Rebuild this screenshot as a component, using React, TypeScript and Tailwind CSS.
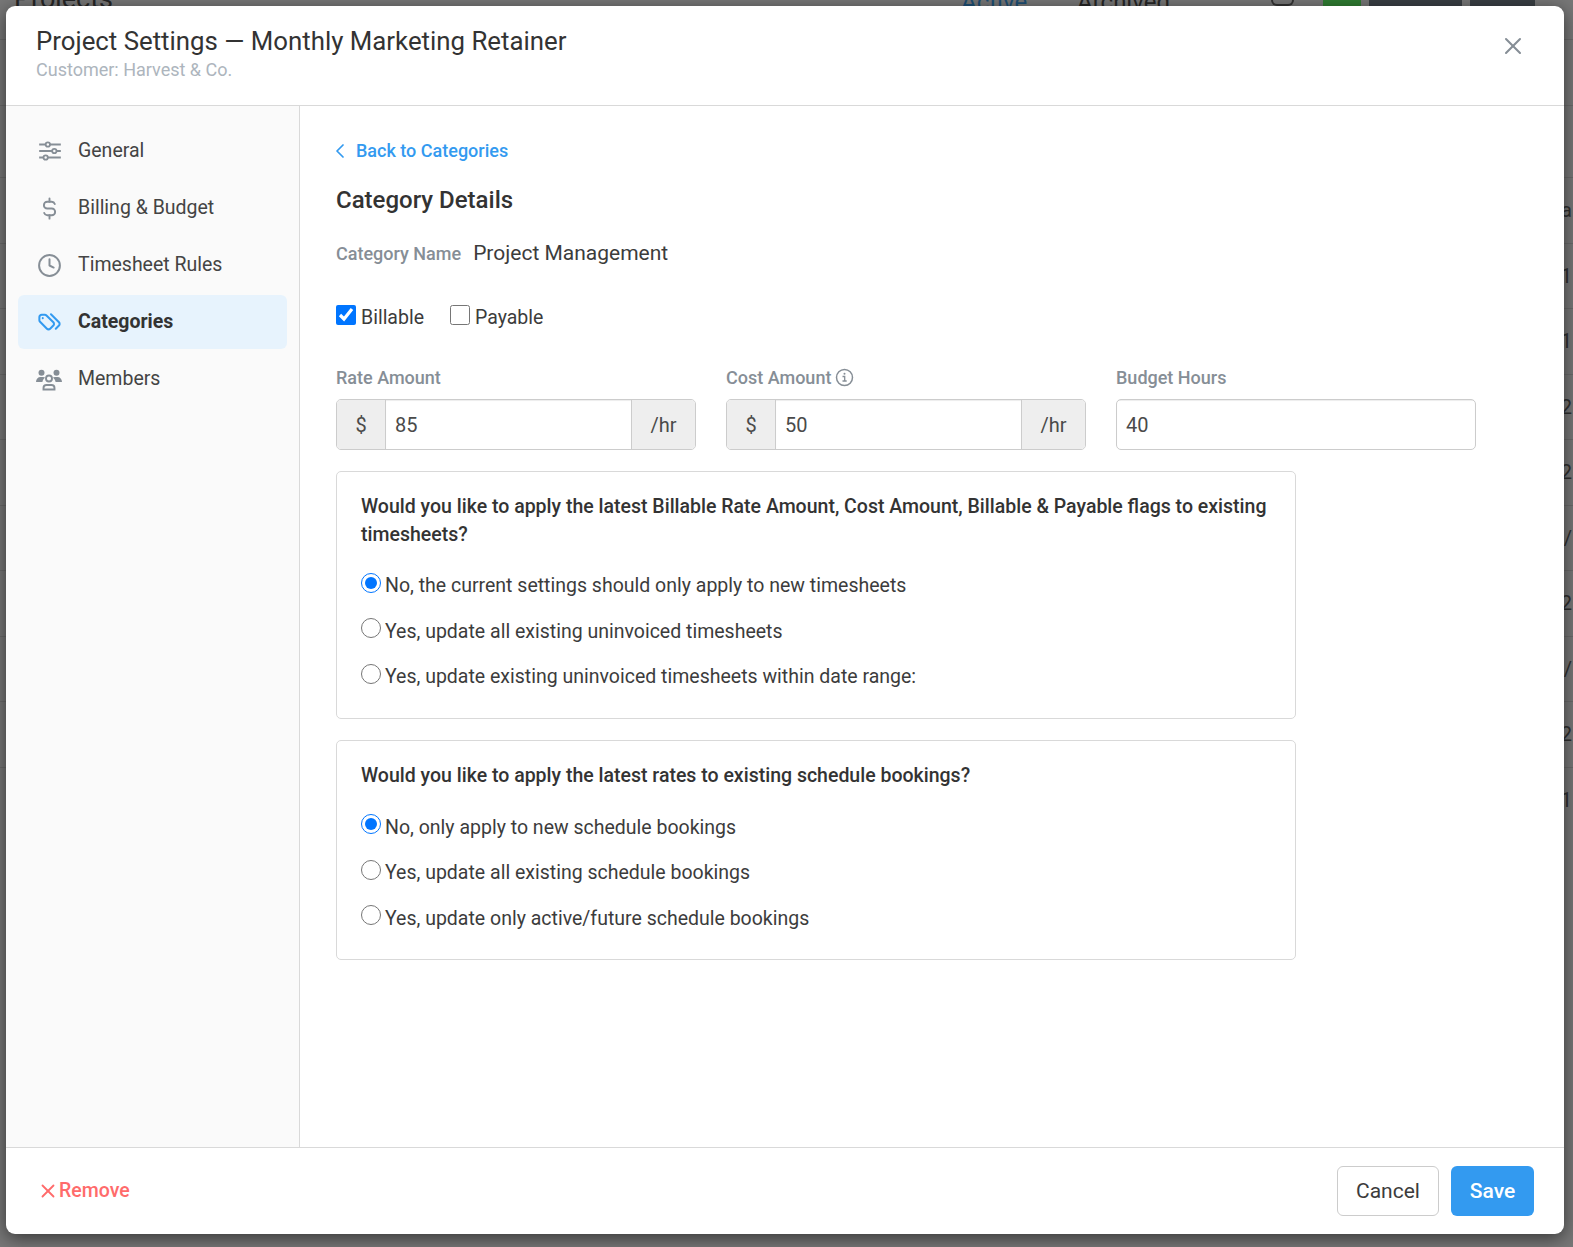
import React from "react";
import { ChevronLeft, Clock, X } from "lucide-react";

function SlidersIcon() {
  return (
    <svg width="26" height="26" viewBox="0 0 24 24" fill="none" stroke="currentColor" strokeWidth="1.7" className="shrink-0">
      <path d="M2 6h6M12 6h10M2 12h12M18 12h4M2 18h4M10 18h12" />
      <circle cx="10" cy="6" r="2" />
      <circle cx="16" cy="12" r="2" />
      <circle cx="8" cy="18" r="2" />
    </svg>
  );
}

function DollarIcon() {
  return (
    <svg width="27" height="27" viewBox="0 0 24 24" fill="none" stroke="currentColor" strokeWidth="1.7" strokeLinecap="round" className="shrink-0">
      <path d="M16.7 8a3 3 0 0 0-2.7-2h-4a3 3 0 0 0 0 6h4a3 3 0 0 1 0 6h-4a3 3 0 0 1-2.7-2" />
      <path d="M12 3v3m0 12v3" />
    </svg>
  );
}

function TagsIcon() {
  return (
    <svg width="27" height="27" viewBox="0 0 24 24" fill="none" stroke="currentColor" strokeWidth="1.8" strokeLinecap="round" strokeLinejoin="round" className="-mt-[2px] shrink-0">
      <path d="M7.859 6h-2.834a2.025 2.025 0 0 0-2.025 2.025v2.834c0 .537.213 1.052.593 1.432l6.116 6.116a2.025 2.025 0 0 0 2.864 0l2.834-2.834a2.025 2.025 0 0 0 0-2.864l-6.117-6.116a2.025 2.025 0 0 0-1.431-.593z" />
      <path d="M17.573 18.407l2.834-2.834a2.025 2.025 0 0 0 0-2.864l-7.117-7.116" />
      <path d="M6 9h-.01" />
    </svg>
  );
}

function MembersIcon() {
  return (
    <svg width="26" height="23" viewBox="0 0 26 23" className="-ml-[2px] shrink-0">
      <g fill="currentColor">
        <circle cx="5.500" cy="4.800" r="3" />
        <circle cx="20.500" cy="4.800" r="3" />
        <path d="M0 14c0-3 2-5 4.500-5h2.500c1 0 1.600.3 2.100.8-1.400 1-2.400 2.400-2.700 4.200H0z" />
        <path d="M26 14c0-3-2-5-4.500-5H19c-1 0-1.600.3-2.100.8 1.400 1 2.400 2.400 2.700 4.200H26z" />
      </g>
      <g fill="none" stroke="currentColor" strokeWidth="1.900">
        <circle cx="13" cy="10.500" r="3" />
        <path d="M7.500 21.500v-1.500c0-2 1.500-3 3-3h5c1.500 0 3 1 3 3v1.500z" />
      </g>
    </svg>
  );
}

function InfoIcon() {
  return (
    <svg width="19" height="19" viewBox="0 0 19 19" fill="none" stroke="currentColor">
      <circle cx="9.500" cy="9.500" r="8" strokeWidth="1.500" />
      <path d="M7.500 8.500h2.200v4.500M7.500 13h4.200" strokeWidth="1.300" />
      <circle cx="9.500" cy="5.800" r="1" fill="currentColor" stroke="none" />
    </svg>
  );
}

const navItems = [
  { label: "General", icon: <SlidersIcon /> },
  { label: "Billing & Budget", icon: <DollarIcon /> },
  { label: "Timesheet Rules", icon: <Clock size={25} strokeWidth={1.9} className="shrink-0" /> },
  { label: "Categories", icon: <TagsIcon />, active: true },
  { label: "Members", icon: <MembersIcon /> },
];

// rows of the table behind the overlay, only their right edge shows
const backRows = ["a", "1", "1", "2", "2", "/", "2", "/", "2", "1"];

function Radio({ checked, label }: { checked?: boolean; label: string }) {
  return (
    <label className="flex h-[45.5px] items-center text-[19.5px] text-[#3c3c3c]">
      <input
        type="radio"
        defaultChecked={checked}
        className="mr-[4px] mt-[-6px] h-[20px] w-[20px] accent-[#0075ff]"
      />
      {label}
    </label>
  );
}

function Affix({ value, prefix, suffix }: { value: string; prefix?: string; suffix?: string }) {
  return (
    <div className="flex h-[51px] overflow-hidden rounded-[5px] border border-[#cccccc] text-[20px] text-[#4a4a4a]">
      {prefix && (
        <span className="flex w-[49px] items-center justify-center border-r border-[#cccccc] bg-[#eeeeee]">
          {prefix}
        </span>
      )}
      <span className="flex min-w-0 flex-1 items-center px-[9px] shadow-[inset_0_1px_1px_rgba(0,0,0,0.075)]">{value}</span>
      {suffix && (
        <span className="flex w-[64px] items-center justify-center border-l border-[#cccccc] bg-[#eeeeee]">
          {suffix}
        </span>
      )}
    </div>
  );
}

export default function App() {
  return (
    <div className="relative h-[1247px] w-[1573px] overflow-hidden bg-[#777777] font-['Roboto',sans-serif]">
      {/* page behind the overlay */}
      <div className="absolute inset-0">
        <div className="flex h-[6px] items-end overflow-hidden pl-[14px] text-[#262626]">
          <span className="w-[947px] shrink-0 text-[27px] leading-[14px]">Projects</span>
          <span className="w-[116px] shrink-0 text-[24px] leading-[8px] text-[#1d4f75]">Active</span>
          <span className="w-[194px] shrink-0 text-[24px] leading-[8px]">Archived</span>
          <span className="mr-[29px] h-[6px] w-[23px] shrink-0 rounded-b-full border-x-2 border-b-2 border-[#333333]" />
          <span className="mr-[8px] h-[6px] w-[38px] shrink-0 bg-[#2f7d32]" />
          <span className="mr-[8px] h-[6px] w-[93px] shrink-0 bg-[#3a3f44]" />
          <span className="h-[6px] w-[65px] shrink-0 bg-[#3a3f44]" />
        </div>
        <div className="mt-[33px] flex h-[66px] border-t border-[#6a6a6a]" />
        <div className="flex h-[72px] border-t border-[#6a6a6a]" />
        {backRows.map((digit, i) => (
          <div
            key={i}
            className="flex h-[65.500px] items-center justify-end border-t border-[#6a6a6a] pr-[1px] text-[20px] text-[#303030]"
          >
            {digit}
          </div>
        ))}
      </div>

      <div className="relative ml-[6px] mt-[6px] flex h-[1228px] w-[1558px] flex-col overflow-hidden rounded-[9px] bg-white shadow-[0_4px_18px_rgba(0,0,0,0.55)]">
        <header className="flex h-[100px] shrink-0 items-start justify-between border-b border-[#d9d9d9] pl-[30px] pr-[37px]">
          <div className="pt-[19px]">
            <h1 className="text-[25.800px] leading-[32px] text-[#333333]">
              Project Settings — Monthly Marketing Retainer
            </h1>
            <p className="mt-[1px] text-[18px] leading-[24px] text-[#adb5bd]">Customer: Harvest &amp; Co.</p>
          </div>
          <X size={28} strokeWidth={1.75} className="mt-[26px] text-[#868e96]" />
        </header>

        <div className="flex min-h-0 flex-1">
          <aside className="flex w-[294px] shrink-0 flex-col gap-[3px] border-r border-[#d9d9d9] bg-[#fafafa] px-[12px] pt-[18px]">
            {navItems.map((item) => (
              <div
                key={item.label}
                className={`flex h-[54px] items-center gap-[17px] rounded-[6px] pl-[20px] text-[19.500px] ${
                  item.active ? "bg-[#e7f3fd] font-bold text-[#333333]" : "text-[#444444]"
                }`}
              >
                <span className={`flex w-[23px] justify-center ${item.active ? "text-[#339af0]" : "text-[#868e96]"}`}>
                  {item.icon}
                </span>
                {item.label}
              </div>
            ))}
          </aside>

          <main className="min-w-0 flex-1 pl-[36px] pt-[32px]">
            <a className="flex h-[24px] items-center text-[18px] font-medium text-[#339af0]">
              <ChevronLeft size={24} strokeWidth={1.75} className="-ml-[8px] mr-[4px] mt-[2px]" />
              Back to Categories
            </a>
            <h2 className="mt-[22px] text-[24px] font-medium leading-[32px] text-[#333333]">Category Details</h2>
            <div className="mt-[21px] flex h-[32px] items-center gap-[12px]">
              <span className="text-[18px] font-medium text-[#868e96]">Category Name</span>
              <span className="pt-[2px] text-[21px] text-[#3c3c3c]">Project Management</span>
            </div>
            <div className="mt-[33px] flex h-[32px] items-center text-[19.500px] text-[#3c3c3c]">
              <label className="flex items-center">
                <input
                  type="checkbox"
                  defaultChecked
                  className="mr-[5px] mt-[-7px] h-[20px] w-[20px] accent-[#0075ff]"
                />
                Billable
              </label>
              <label className="ml-[26px] flex items-center">
                <input type="checkbox" className="mr-[5px] mt-[-7px] h-[20px] w-[20px]" />
                Payable
              </label>
            </div>

            <div className="mt-[30px] grid w-[1140px] grid-cols-3 gap-[30px]">
              <div>
                <div className="mb-[9px] flex h-[26px] items-center text-[18px] font-medium text-[#868e96]">Rate Amount</div>
                <Affix value="85" prefix="$" suffix="/hr" />
              </div>
              <div>
                <div className="mb-[9px] flex h-[26px] items-center gap-[4px] text-[18px] font-medium text-[#868e96]">
                  Cost Amount
                  <span className="text-[#868e96]">
                    <InfoIcon />
                  </span>
                </div>
                <Affix value="50" prefix="$" suffix="/hr" />
              </div>
              <div>
                <div className="mb-[9px] flex h-[26px] items-center text-[18px] font-medium text-[#868e96]">Budget Hours</div>
                <Affix value="40" />
              </div>
            </div>

            <section className="mt-[21px] w-[960px] rounded-[5px] border border-[#d9d9d9] px-[24px] pb-[18px] pt-[21px]">
              <p className="mb-[14px] text-[19.500px] font-medium leading-[28px] text-[#333333]">
                Would you like to apply the latest Billable Rate Amount, Cost Amount, Billable &amp; Payable flags to existing timesheets?
              </p>
              <Radio checked label="No, the current settings should only apply to new timesheets" />
              <Radio label="Yes, update all existing uninvoiced timesheets" />
              <Radio label="Yes, update existing uninvoiced timesheets within date range:" />
            </section>

            <section className="mt-[21px] w-[960px] rounded-[5px] border border-[#d9d9d9] px-[24px] pb-[18px] pt-[21px]">
              <p className="mb-[15px] text-[19.500px] font-medium leading-[28px] text-[#333333]">
                Would you like to apply the latest rates to existing schedule bookings?
              </p>
              <Radio checked label="No, only apply to new schedule bookings" />
              <Radio label="Yes, update all existing schedule bookings" />
              <Radio label="Yes, update only active/future schedule bookings" />
            </section>
          </main>
        </div>

        <footer className="flex h-[87px] shrink-0 items-center justify-between border-t border-[#d9d9d9] pl-[31px] pr-[30px]">
          <button className="flex items-center gap-0 text-[19.500px] font-medium text-[#ff6b6b]">
            <X size={22} strokeWidth={2} />
            Remove
          </button>
          <div className="flex gap-[12px]">
            <button className="h-[50px] w-[102px] rounded-[6px] border border-[#cccccc] bg-white pt-[2px] text-[21px] text-[#3c3c3c]">Cancel</button>
            <button className="h-[50px] w-[83px] rounded-[6px] bg-[#339af0] pt-[2px] text-[21px] font-medium text-white">Save</button>
          </div>
        </footer>
      </div>
    </div>
  );
}
